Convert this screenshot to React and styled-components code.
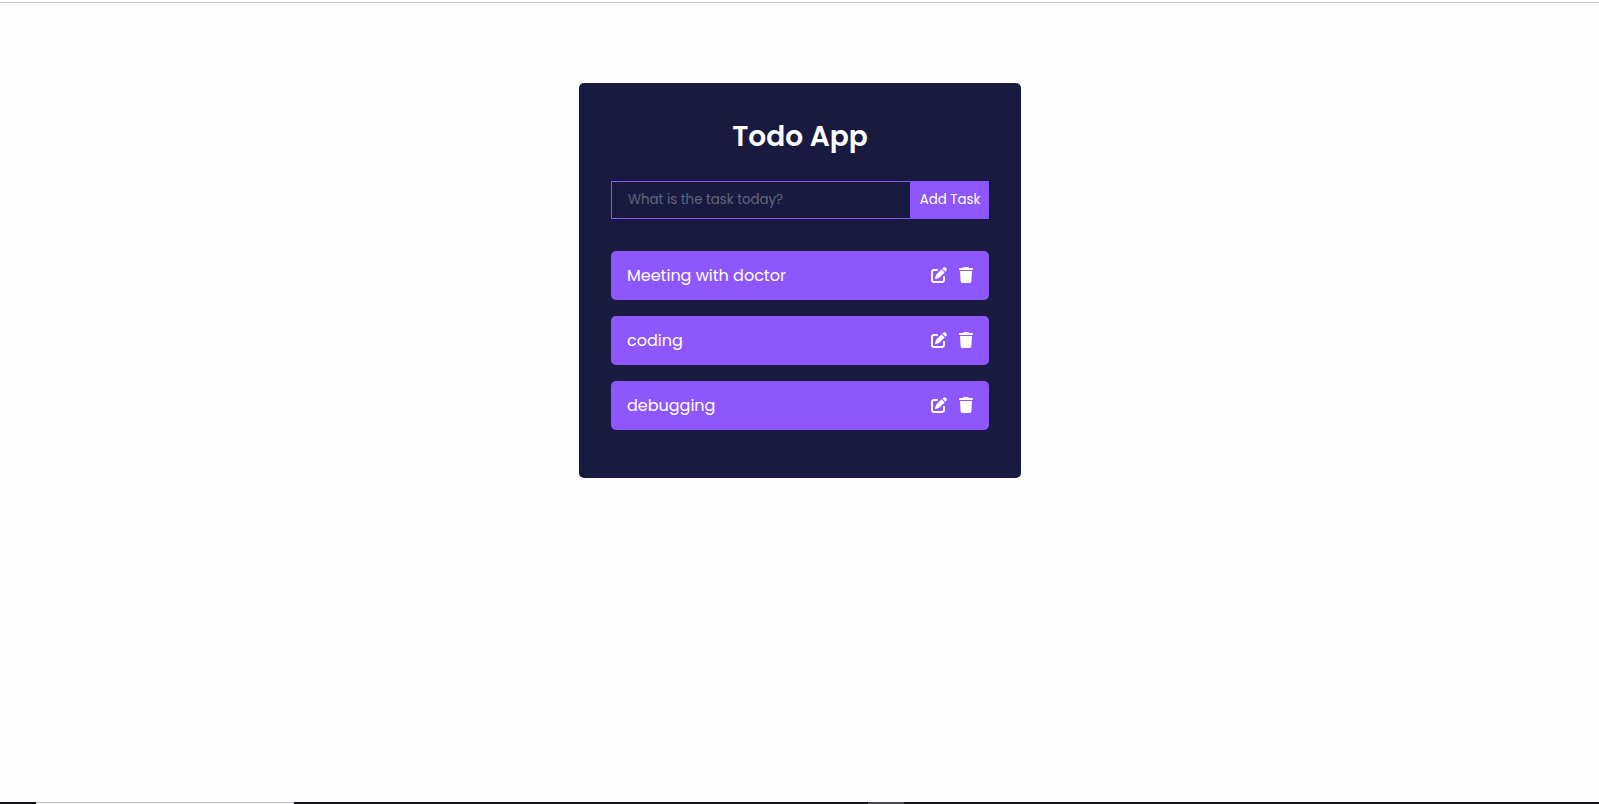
import React, { useState } from "react";
import styled, { createGlobalStyle } from "styled-components";
import { FaPenToSquare, FaTrash } from "react-icons/fa6";

const GlobalStyle = createGlobalStyle`
  *, *::before, *::after {
    box-sizing: border-box;
    margin: 0;
    padding: 0;
  }
  body {
    background: #fdfdfd;
    color: #fff;
    font-family: Poppins, Inter, "Open Sans", sans-serif;
    font-size: 16px;
  }
`;

const Page = styled.div`
  display: flex;
  flex-direction: column;
  min-height: 100vh;
`;

const TopEdge = styled.div`
  height: 3px;
  background: #fff;
  border-bottom: 1px solid #cbcbcb;
`;

const Main = styled.main`
  flex: 1;
  padding: 80px 0 80px 1px;
`;

const Card = styled.section`
  width: 100%;
  max-width: 442px;
  margin: 0 auto;
  padding: 32px;
  border-radius: 5px;
  background: #191a3f;
`;

const Title = styled.h1`
  margin-bottom: 22px;
  font-size: 28px;
  font-weight: 600;
  line-height: 44px;
  text-align: center;
`;

const Form = styled.form`
  display: flex;
  height: 38px;
  margin-bottom: 32px;
`;

const TaskInput = styled.input`
  flex: 1;
  min-width: 0;
  padding: 0 16px;
  border: 1px solid #8758ff;
  border-right: 0;
  outline: none;
  background: none;
  color: #fff;
  font-family: inherit;

  &::placeholder {
    color: #ffffff55;
  }
`;

const AddButton = styled.button`
  width: 79px;
  padding-left: 1px;
  border: 0;
  background: #8e57fe;
  color: #fff;
  font-family: inherit;
  white-space: nowrap;
  cursor: pointer;
`;

const TaskList = styled.ul`
  list-style: none;
`;

const Task = styled.li`
  display: flex;
  align-items: center;
  justify-content: space-between;
  height: 49px;
  margin-bottom: 16px;
  padding: 0 16px;
  border-radius: 5px;
  background: #8e57fe;
`;

const TaskName = styled.p`
  font-size: 16px;
  line-height: 25px;
`;

const Actions = styled.div`
  display: flex;
  align-items: center;
  gap: 12px;
`;

const IconButton = styled.button`
  display: flex;
  height: 17px;
  border: 0;
  background: none;
  color: #fff;
  cursor: pointer;

  svg {
    width: ${({ $iconWidth }) => $iconWidth}px;
    height: 16px;
  }
`;

const BottomEdge = styled.div`
  display: flex;
  height: 2px;
  background: #151418;
`;

const LightSegment = styled.div`
  width: 258px;
  margin-left: 36px;
  border-top: 1px solid #c2c2c2;
  background: #f3f3f3;
`;

const GreySegment = styled.div`
  width: 36px;
  margin-left: 574px;
  background: #4b494d;
`;

export default function App() {
  const [tasks, setTasks] = useState(["Meeting with doctor", "coding", "debugging"]);
  const [value, setValue] = useState("");

  const addTask = (event) => {
    event.preventDefault();
    if (!value.trim()) return;
    setTasks([...tasks, value.trim()]);
    setValue("");
  };

  const removeTask = (index) => setTasks(tasks.filter((_, i) => i !== index));

  const editTask = (index) => {
    setValue(tasks[index]);
    removeTask(index);
  };

  return (
    <Page>
      <GlobalStyle />
      <TopEdge />
      <Main>
        <Card>
          <Title>Todo App</Title>
          <Form onSubmit={addTask}>
            <TaskInput
              type="text"
              aria-label="Task"
              placeholder="What is the task today?"
              value={value}
              onChange={(event) => setValue(event.target.value)}
            />
            <AddButton type="submit">Add Task</AddButton>
          </Form>
          <TaskList>
            {tasks.map((task, index) => (
              <Task key={`${task}-${index}`}>
                <TaskName>{task}</TaskName>
                <Actions>
                  <IconButton type="button" $iconWidth={16} aria-label={`Edit ${task}`} onClick={() => editTask(index)}>
                    <FaPenToSquare />
                  </IconButton>
                  <IconButton type="button" $iconWidth={14} aria-label={`Delete ${task}`} onClick={() => removeTask(index)}>
                    <FaTrash />
                  </IconButton>
                </Actions>
              </Task>
            ))}
          </TaskList>
        </Card>
      </Main>
      <BottomEdge>
        <LightSegment />
        <GreySegment />
      </BottomEdge>
    </Page>
  );
}
